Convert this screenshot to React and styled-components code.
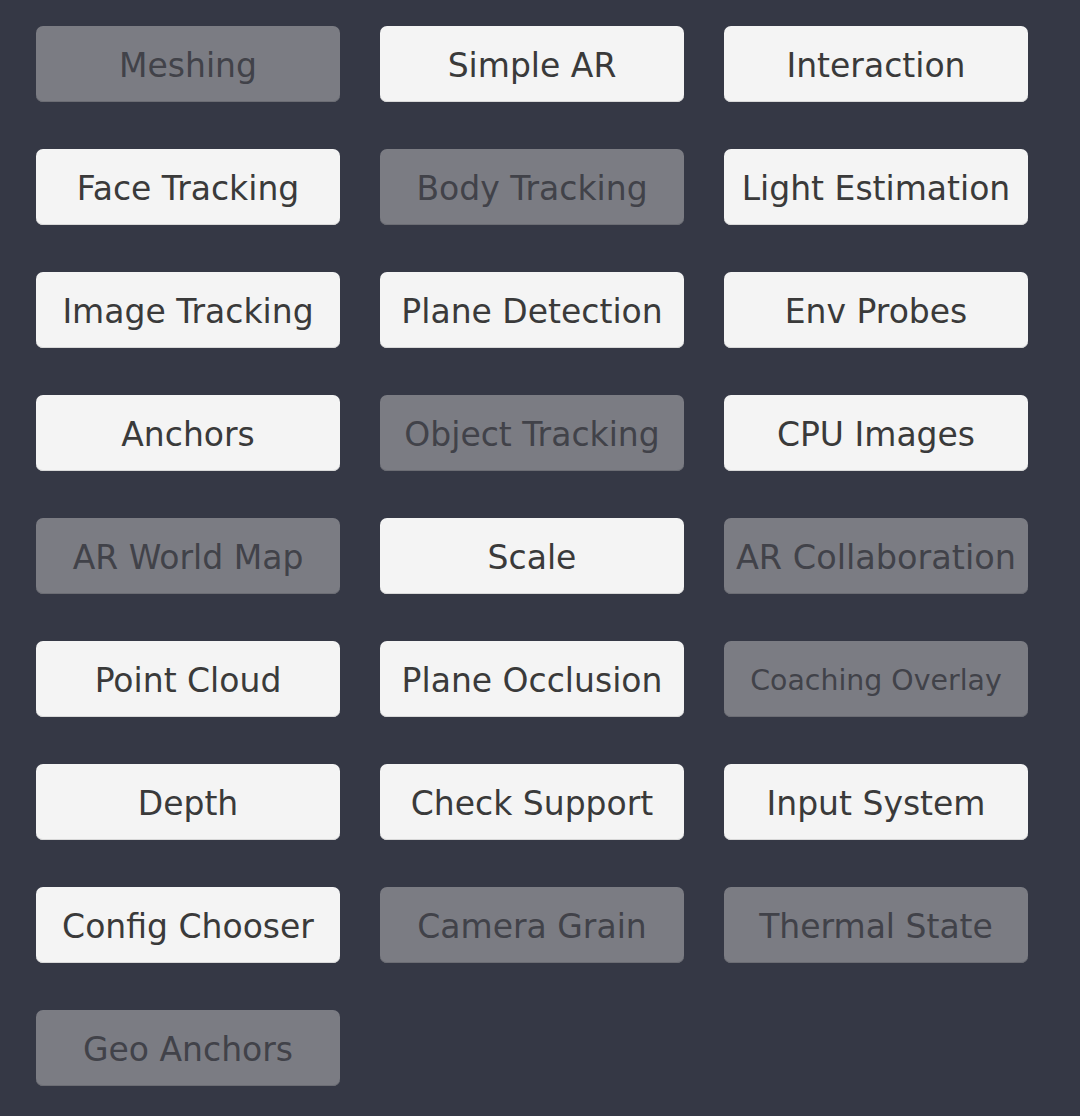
import React from "react";
import styled, { createGlobalStyle } from "styled-components";

const Global = createGlobalStyle`
  html, body { margin: 0; padding: 0; background: #353845; }
  body { font-family: "DejaVu Sans", sans-serif; }
`;

const Page = styled.div`
  min-height: 1116px;
  background: #353845;
  padding: 26px 0 0 36px;
  box-sizing: border-box;
`;

const Grid = styled.div`
  display: grid;
  grid-template-columns: repeat(3, 304px);
  grid-auto-rows: 76px;
  column-gap: 40px;
  row-gap: 47px;
`;

const Button = styled.div`
  display: flex;
  align-items: center;
  justify-content: center;
  border-radius: 7px;
  background: ${(p) => (p.$disabled ? "#7b7c83" : "#f4f4f4")};
  box-shadow: inset 0 -1px 0 ${(p) => (p.$disabled ? "#6c6d74" : "#d8d8d8")};
  color: ${(p) => (p.$disabled ? "#414249" : "#3a3a3a")};
  font-family: "DejaVu Sans", sans-serif;
  font-size: ${(p) => p.$size || 33}px;
  white-space: nowrap;
  padding-top: 3px;
  box-sizing: border-box;
`;

const items = [
  ["Meshing", true],
  ["Simple AR", false],
  ["Interaction", false],
  ["Face Tracking", false],
  ["Body Tracking", true],
  ["Light Estimation", false],
  ["Image Tracking", false],
  ["Plane Detection", false],
  ["Env Probes", false],
  ["Anchors", false],
  ["Object Tracking", true],
  ["CPU Images", false],
  ["AR World Map", true],
  ["Scale", false],
  ["AR Collaboration", true, 33.5],
  ["Point Cloud", false],
  ["Plane Occlusion", false],
  ["Coaching Overlay", true, 28.4],
  ["Depth", false],
  ["Check Support", false],
  ["Input System", false],
  ["Config Chooser", false],
  ["Camera Grain", true],
  ["Thermal State", true],
  ["Geo Anchors", true],
];

export default function App() {
  return (
    <>
      <Global />
      <Page>
        <Grid>
          {items.map(([label, disabled, size]) => (
            <Button key={label} $disabled={disabled} $size={size}>
              {label}
            </Button>
          ))}
        </Grid>
      </Page>
    </>
  );
}
